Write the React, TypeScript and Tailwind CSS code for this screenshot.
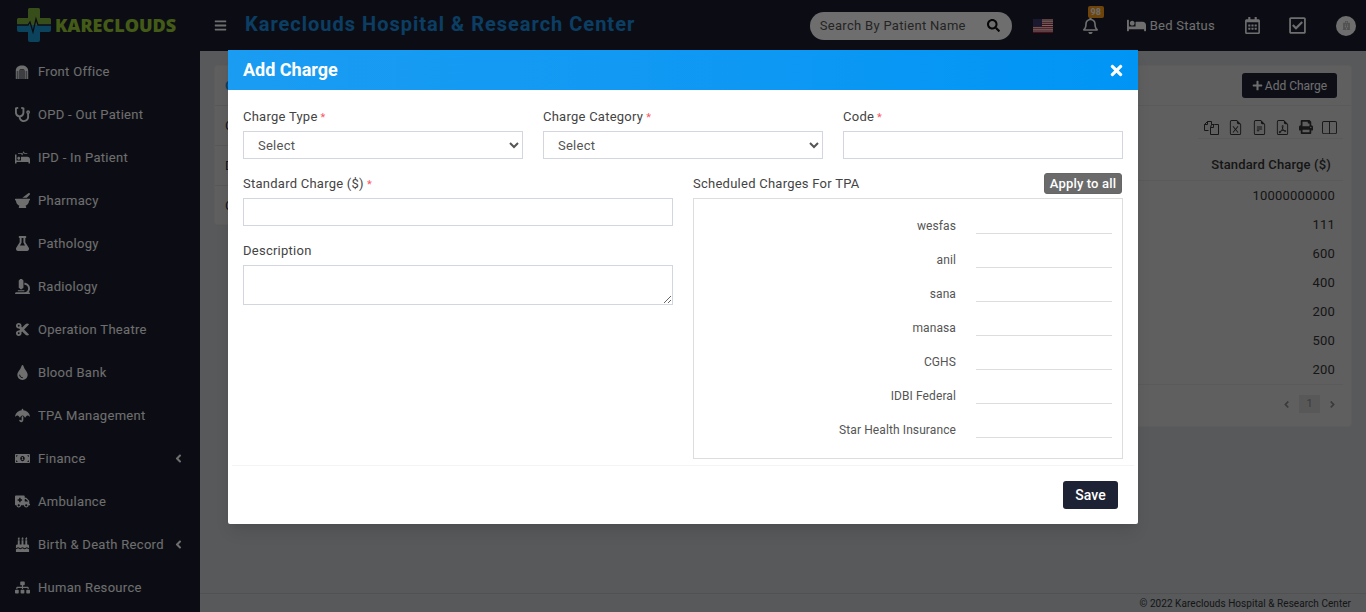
import React from 'react';
import {
  FaAmbulance, FaAngleLeft, FaAngleRight, FaBars, FaBed, FaBirthdayCake, FaCut, FaFlask, FaHospital,
  FaMicroscope, FaMoneyBillAlt, FaMortarPestle, FaPlus, FaPrint, FaProcedures, FaRegBell, FaRegCalendarAlt,
  FaRegCheckSquare, FaSearch, FaSitemap, FaStethoscope, FaTimes, FaTint, FaUmbrella,
} from 'react-icons/fa';
import { BsFileEarmarkExcel, BsFileEarmarkPdf, BsFileEarmarkText, BsLayoutSplit } from 'react-icons/bs';

function FrontOfficeIcon() {
  return (
    <svg width="14" height="14" viewBox="0 0 14 14" fill="none" stroke="currentColor">
      <path d="M0.8 14V5.5C0.8 2.4 3.6 0.5 7 0.5s6.2 1.9 6.2 5.5V14h-3V6.5C10.2 5 8.8 4 7 4S3.8 5 3.8 6.5V14z" fill="currentColor" strokeWidth="0" />
      <path d="M5 5v9M7 4.5V14M9 5v9" strokeWidth="1" />
      <path d="M2.3 6v8M11.7 6v8" stroke="#1c2030" strokeWidth="0.6" />
    </svg>
  );
}

function CopyIcon() {
  return (
    <svg width="15" height="15" viewBox="0 0 15 15" fill="none" stroke="currentColor" strokeWidth="1">
      <path d="M4.5 10.5h-4v-6l3-3h4v3" />
      <path d="M3.5 1.5v3h-3" />
      <path d="M7.5 4.5h3l4-0v10h-8v-7z" />
      <path d="M9.5 4.5v3h-3" />
    </svg>
  );
}

const menu = [
  { label: 'Front Office', icon: FrontOfficeIcon },
  { label: 'OPD - Out Patient', icon: FaStethoscope },
  { label: 'IPD - In Patient', icon: FaProcedures },
  { label: 'Pharmacy', icon: FaMortarPestle },
  { label: 'Pathology', icon: FaFlask },
  { label: 'Radiology', icon: FaMicroscope },
  { label: 'Operation Theatre', icon: FaCut },
  { label: 'Blood Bank', icon: FaTint },
  { label: 'TPA Management', icon: FaUmbrella },
  { label: 'Finance', icon: FaMoneyBillAlt, arrow: true },
  { label: 'Ambulance', icon: FaAmbulance },
  { label: 'Birth & Death Record', icon: FaBirthdayCake, arrow: true },
  { label: 'Human Resource', icon: FaSitemap },
];

const tpas = ['wesfas', 'anil', 'sana', 'manasa', 'CGHS', 'IDBI Federal', 'Star Health Insurance'];
const charges = ['10000000000', '111', '600', '400', '200', '500', '200'];
// only the first letters of these rows show beside the modal
const sideItems = ['C', 'C', 'D', 'C'];

function Logo() {
  return (
    <svg width="34" height="34" viewBox="0 0 34 34" className="shrink-0">
      <path d="M11 1.5a1.5 1.5 0 0 1 1.5-1.5h9a1.5 1.5 0 0 1 1.5 1.5V10h9.5a1.5 1.5 0 0 1 1.5 1.5V17H0v-5.5A1.5 1.5 0 0 1 1.5 10H11z" fill="#8cc63f" opacity="0.9" />
      <path d="M0 17h34v5a2 2 0 0 1-2 2h-9v8a2 2 0 0 1-2 2h-8a2 2 0 0 1-2-2v-8H2a2 2 0 0 1-2-2z" fill="#1b9ad6" />
      <path d="M0 17h11l2-3 3 10 3-13 2 6h13" fill="none" stroke="#1c2030" strokeWidth="1.3" />
    </svg>
  );
}

function UsFlag() {
  return (
    <svg width="20" height="14" viewBox="0 0 20 14">
      <rect width="20" height="14" fill="#fff" />
      <path d="M0 1h20M0 3.2h20M0 5.4h20M0 7.6h20M0 9.8h20M0 12h20M0 13.6h20" stroke="#b22234" strokeWidth="1.1" />
      <rect width="9" height="7.5" fill="#3c3b6e" />
    </svg>
  );
}

function Req() {
  return <span className="text-[#fb5566] ml-[3px] text-[11px]">*</span>;
}

function AddChargeModal() {
  return (
    <div className="absolute left-[228px] top-[50px] w-[910px] h-[474px] bg-white rounded-[2px] shadow-lg text-[#444] text-[13px] tracking-[0.25px]">
      <div className="h-10 px-[15px] flex items-center justify-between text-white bg-gradient-to-r from-[#1a9cf2] to-[#0095f5]">
        <span className="text-lg font-bold tracking-normal">Add Charge</span>
        <FaTimes className="text-[17px] mr-[-2px]" />
      </div>
      <div className="px-[15px] pt-[18px] h-[375px]">
        <div className="flex gap-5">
          {['Charge Type', 'Charge Category'].map((name) => (
            <div key={name} className="w-[280px]">
              <label className="block h-[23px] leading-[17px]">{name}<Req /></label>
              <select className="w-full h-7 pl-[10px] border border-[#d2d6de] bg-white text-[#555] outline-none">
                <option>Select</option>
              </select>
            </div>
          ))}
          <div className="w-[280px]">
            <label className="block h-[23px] leading-[17px]">Code<Req /></label>
            <input className="block w-full h-7 border border-[#d2d6de]" />
          </div>
        </div>
        <div className="flex gap-5 mt-[15px]">
          <div className="w-[430px]">
            <label className="block h-[24px] leading-[19px]">Standard Charge ($)<Req /></label>
            <input className="block w-full h-7 border border-[#d2d6de]" />
            <label className="block h-[24px] leading-[19px] mt-[15px]">Description</label>
            <textarea className="block w-full h-10 border border-[#d2d6de]" />
          </div>
          <div className="w-[430px]">
            <div className="flex justify-between h-[24px]">
              <span className="leading-[19px]">Scheduled Charges For TPA</span>
              <button className="h-[21px] -mt-[1px] mr-[1px] w-[78px] bg-[#6b6b6b] border border-[#666] rounded-[3px] text-white font-medium leading-none tracking-[0.15px]">Apply to all</button>
            </div>
            <div className="h-[261px] border border-[#ddd] pt-[1px] pr-[10px]">
              {tpas.map((tpa) => (
                <div key={tpa} className="flex items-end justify-end h-[34px] gap-5">
                  <span className="text-[12px] mb-[-1px] text-[#555] tracking-[0.1px]">{tpa}</span>
                  <input className="w-[136px] h-[24px] border-b border-[#ddd]" />
                </div>
              ))}
            </div>
          </div>
        </div>
      </div>
      <div className="mx-[4px] border-t border-[#f4f4f4] h-[58px] flex items-start justify-end pt-[15px] pr-[16px]">
        <button className="w-[55px] h-7 rounded-[3px] bg-[#1e2235] text-white text-[14px] font-medium tracking-normal">Save</button>
      </div>
    </div>
  );
}

export default function App() {
  return (
    <div className="relative h-screen overflow-hidden flex bg-[#c9ced2]" style={{ fontFamily: 'Roboto, "Liberation Sans", sans-serif' }}>
      <aside className="w-[200px] shrink-0 bg-[#1c2030] text-white text-[13px] tracking-[0.3px]">
        <div className="h-[50px] flex items-center pl-[17px] gap-[4px]">
          <Logo />
          <span className="text-[18px] font-extrabold tracking-normal text-[#9ed238]" style={{ fontFamily: '"Open Sans", sans-serif' }}>KARECLOUDS</span>
        </div>
        {menu.map((item) => (
          <div key={item.label} className="h-[43px] flex items-center pl-[15px] pr-[15px]">
            <span className="w-[23px] flex justify-start text-[15px]"><item.icon /></span>
            <span className="flex-1">{item.label}</span>
            {item.arrow && <FaAngleLeft className="text-[13px]" />}
          </div>
        ))}
      </aside>

      <div className="flex-1 flex flex-col min-w-0">
        <header className="h-[51px] shrink-0 bg-[#1c2030] text-white flex items-center pl-[15px] pr-[10px]">
          <FaBars className="text-[13px] -ml-px" />
          <h1 className="ml-[18px] -mt-[3px] text-xl font-bold tracking-[1px] text-[#1a8fe3]">Kareclouds Hospital &amp; Research Center</h1>
          <div className="ml-auto w-[202px] h-7 rounded-full bg-white flex items-center justify-between pl-[10px] pr-[12px] text-[13px] tracking-[0.3px]">
            <span className="text-[#555]">Search By Patient Name</span>
            <FaSearch className="text-[13px] text-[#111]" />
          </div>
          <span className="ml-[21px]"><UsFlag /></span>
          <span className="relative ml-[29px] text-[17px]">
            <FaRegBell />
            <span className="absolute -top-[11px] left-[6px] w-4 h-[12px] rounded-[2px] bg-[#ff9f1a] text-[9px] leading-[12px] text-center font-bold">98</span>
          </span>
          <FaBed className="ml-[28px] text-[19px]" />
          <span className="ml-[4px] text-[13px] tracking-[0.25px]">Bed Status</span>
          <FaRegCalendarAlt className="ml-[29px] text-[17px]" />
          <FaRegCheckSquare className="ml-[27px] text-[19px]" />
          <span className="ml-[29px] w-5 h-5 rounded-full bg-white flex items-center justify-center text-[#bbb] text-[9px]"><FaHospital /></span>
        </header>

        <main className="flex-1 min-h-0 pt-[14px] px-[14px] flex gap-4 items-start text-[#333] text-[13px]">
          <div className="w-[220px] shrink-0 h-[160px] bg-[#dcdcdc] border border-[#d5d5d5] rounded-[3px]">
            {sideItems.map((item, i) => (
              <div key={i} className={`h-10 flex items-center pl-[10px] border-b border-[#ccc] ${i === 0 ? 'font-bold text-[#1a8fe3]' : ''}`}>{item}</div>
            ))}
          </div>
          <section className="flex-1 h-[362px] bg-[#dcdcdc] border border-[#d5d5d5] rounded-[3px] flex flex-col">
            <div className="h-10 shrink-0 border-b border-[#d0d0d0] flex items-center justify-end pr-[14px]">
              <button className="h-[25px] w-[95px] rounded-[3px] bg-[#1e2235] text-white flex items-center justify-center gap-[2px] text-[12px]">
                <FaPlus className="text-[11px]" />Add Charge
              </button>
            </div>
            <div className="ml-auto mr-[8px] w-[145px] h-[33px] border-b border-[#d0d0d0] flex items-center justify-between px-[6px] pt-[10px] text-[15px]">
              <CopyIcon /><BsFileEarmarkExcel /><BsFileEarmarkText /><BsFileEarmarkPdf /><FaPrint className="text-[14px]" /><BsLayoutSplit />
            </div>
            <div className="mr-[8px] h-[42px] border-b border-[#d0d0d0] flex items-center justify-end pr-[12px] pt-[10px] font-medium tracking-[0.15px]">Standard Charge ($)</div>
            {charges.map((charge, i) => (
              <div key={i} className="h-[29px] shrink-0 mr-[16px] flex items-center justify-end tracking-[0.2px]">{charge}</div>
            ))}
            <div className="mr-[8px] flex-1 border-t border-[#d0d0d0] flex items-center justify-end gap-[7px] pr-[5px] pb-[3px] text-[11px] text-[#888]">
              <FaAngleLeft />
              <span className="w-[21px] h-[18px] bg-[#ccc] text-center leading-[18px]">1</span>
              <FaAngleRight />
            </div>
          </section>
        </main>

        <footer className="h-[19px] shrink-0 border-t border-[#bbb] text-[10px] tracking-[0.05px] text-[#333] text-right pr-[15px] leading-[19px]">
          © 2022 Kareclouds Hospital &amp; Research Center
        </footer>
      </div>

      <div className="absolute inset-0 bg-black/[0.57]" />
      <AddChargeModal />
    </div>
  );
}
